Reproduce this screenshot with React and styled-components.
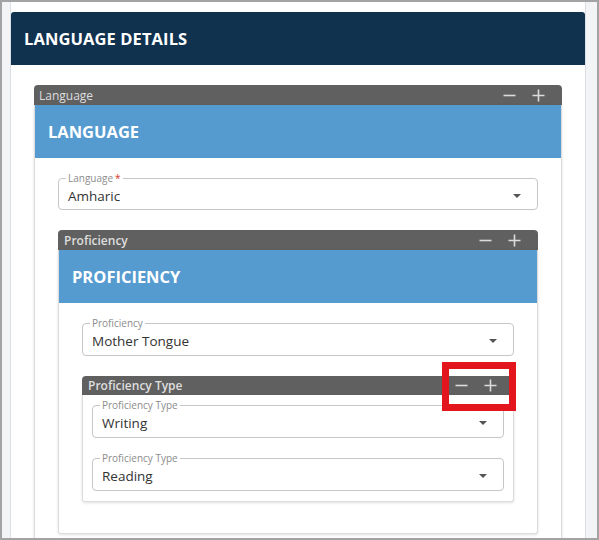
import React from "react";
import styled, { createGlobalStyle } from "styled-components";

const GlobalStyle = createGlobalStyle`
  html, body { margin: 0; padding: 0; background: #ffffff; }
  body { font-family: "Open Sans", "Noto Sans", Arial, sans-serif; }
  * { box-sizing: border-box; }
`;

const Frame = styled.div`
  width: 599px;
  height: 540px;
  border: 2px solid #a3a3a3;
  background: #f2f4f6;
  overflow: hidden;
  display: flex;
  padding-left: 8px;
`;

const Panel = styled.div`
  width: 576px;
  background: #ffffff;
  border-left: 1px solid #dcdfe3;
  border-right: 1px solid #dcdfe3;
  padding-top: 10px;
`;

const PanelHeader = styled.div`
  height: 53px;
  background: #10324f;
  border-radius: 3px 3px 0 0;
  display: flex;
  align-items: center;
  padding-left: 13px;
  color: #ffffff;
  font-weight: 700;
  font-size: 16.5px;
  letter-spacing: 0.1px;
`;

const PanelBody = styled.div`
  padding: 20px 23px 0 23px;
`;

const Section = styled.div`
  position: relative;
  display: flex;
  flex-direction: column;
`;

const Bar = styled.div`
  height: ${(p) => p.$h || 20}px;
  background: #606060;
  border-radius: 4px 4px 0 0;
  display: flex;
  align-items: center;
  justify-content: space-between;
  padding: 0 17px 0 ${(p) => p.$pl || 5}px;
  color: #dedede;
  font-size: 12px;
  font-weight: ${(p) => (p.$bold ? 600 : 400)};
`;

const Controls = styled.div`
  display: flex;
  align-items: center;
  gap: 16px;
`;

const Card = styled.div`
  background: #ffffff;
  border: 1px solid #dcdcdc;
  border-top: none;
  border-radius: 0 0 3px 3px;
  box-shadow: 0 1px 3px rgba(0, 0, 0, 0.12);
`;

const BlueHeader = styled.div`
  height: 53px;
  background: #569bd0;
  display: flex;
  align-items: center;
  padding-left: 13px;
  color: #ffffff;
  font-weight: 700;
  font-size: 16.5px;
`;

const CardBody = styled.div`
  display: flex;
  flex-direction: column;
  gap: 20px;
  padding: ${(p) => p.$pad};
`;

const FieldBox = styled.div`
  position: relative;
  height: ${(p) => p.$h || 33}px;
  border: 1px solid #c6c6c6;
  border-radius: 4px;
  display: flex;
  align-items: center;
  justify-content: space-between;
  padding: 3px 16px 0 9px;
`;

const FieldLabel = styled.span`
  position: absolute;
  top: -7px;
  left: 7px;
  padding: 0 2px;
  background: #ffffff;
  font-size: 10px;
  line-height: 12px;
  color: #8c8c8c;
`;

const Req = styled.span`
  color: #d9342b;
  margin-left: 2px;
`;

const FieldValue = styled.span`
  font-size: 13.5px;
  color: #333333;
`;

const Caret = styled.span`
  width: 0;
  height: 0;
  border-left: 4px solid transparent;
  border-right: 4px solid transparent;
  border-top: 4px solid #555555;
`;

const Highlight = styled.div`
  position: absolute;
  top: -14px;
  left: 360px;
  width: 74px;
  height: 49px;
  border: 7px solid #e3161d;
  pointer-events: none;
`;

const Minus = () => (
  <svg width="13" height="13" viewBox="0 0 13 13">
    <path d="M0.5 6.5H12.5" stroke="#dcdcdc" strokeWidth="1.6" />
  </svg>
);

const Plus = () => (
  <svg width="13" height="13" viewBox="0 0 13 13">
    <path d="M0.5 6.5H12.5M6.5 0.5V12.5" stroke="#dcdcdc" strokeWidth="1.6" />
  </svg>
);

const BarControls = () => (
  <Controls>
    <Minus />
    <Plus />
  </Controls>
);

const Field = ({ label, value, required, h }) => (
  <FieldBox $h={h}>
    <FieldLabel>
      {label}
      {required && <Req>*</Req>}
    </FieldLabel>
    <FieldValue>{value}</FieldValue>
    <Caret />
  </FieldBox>
);

export default function App() {
  return (
    <>
      <GlobalStyle />
      <Frame>
        <Panel>
          <PanelHeader>LANGUAGE DETAILS</PanelHeader>
          <PanelBody>
            <Section>
              <Bar>
                <span>Language</span>
                <BarControls />
              </Bar>
              <Card>
                <BlueHeader>LANGUAGE</BlueHeader>
                <CardBody $pad="20px 23px 40px">
                  <Field label="Language" value="Amharic" required h={32} />
                  <Section>
                    <Bar $pl={6} $bold>
                      <span>Proficiency</span>
                      <BarControls />
                    </Bar>
                    <Card>
                      <BlueHeader>PROFICIENCY</BlueHeader>
                      <CardBody $pad="20px 23px 31px">
                        <Field label="Proficiency" value="Mother Tongue" />
                        <Section>
                          <Bar $pl={6} $h={19} $bold>
                            <span>Proficiency Type</span>
                            <BarControls />
                          </Bar>
                          <Card>
                            <CardBody $pad="10px 9px 10px">
                              <Field label="Proficiency Type" value="Writing" />
                              <Field label="Proficiency Type" value="Reading" />
                            </CardBody>
                          </Card>
                          <Highlight />
                        </Section>
                      </CardBody>
                    </Card>
                  </Section>
                </CardBody>
              </Card>
            </Section>
          </PanelBody>
        </Panel>
      </Frame>
    </>
  );
}
